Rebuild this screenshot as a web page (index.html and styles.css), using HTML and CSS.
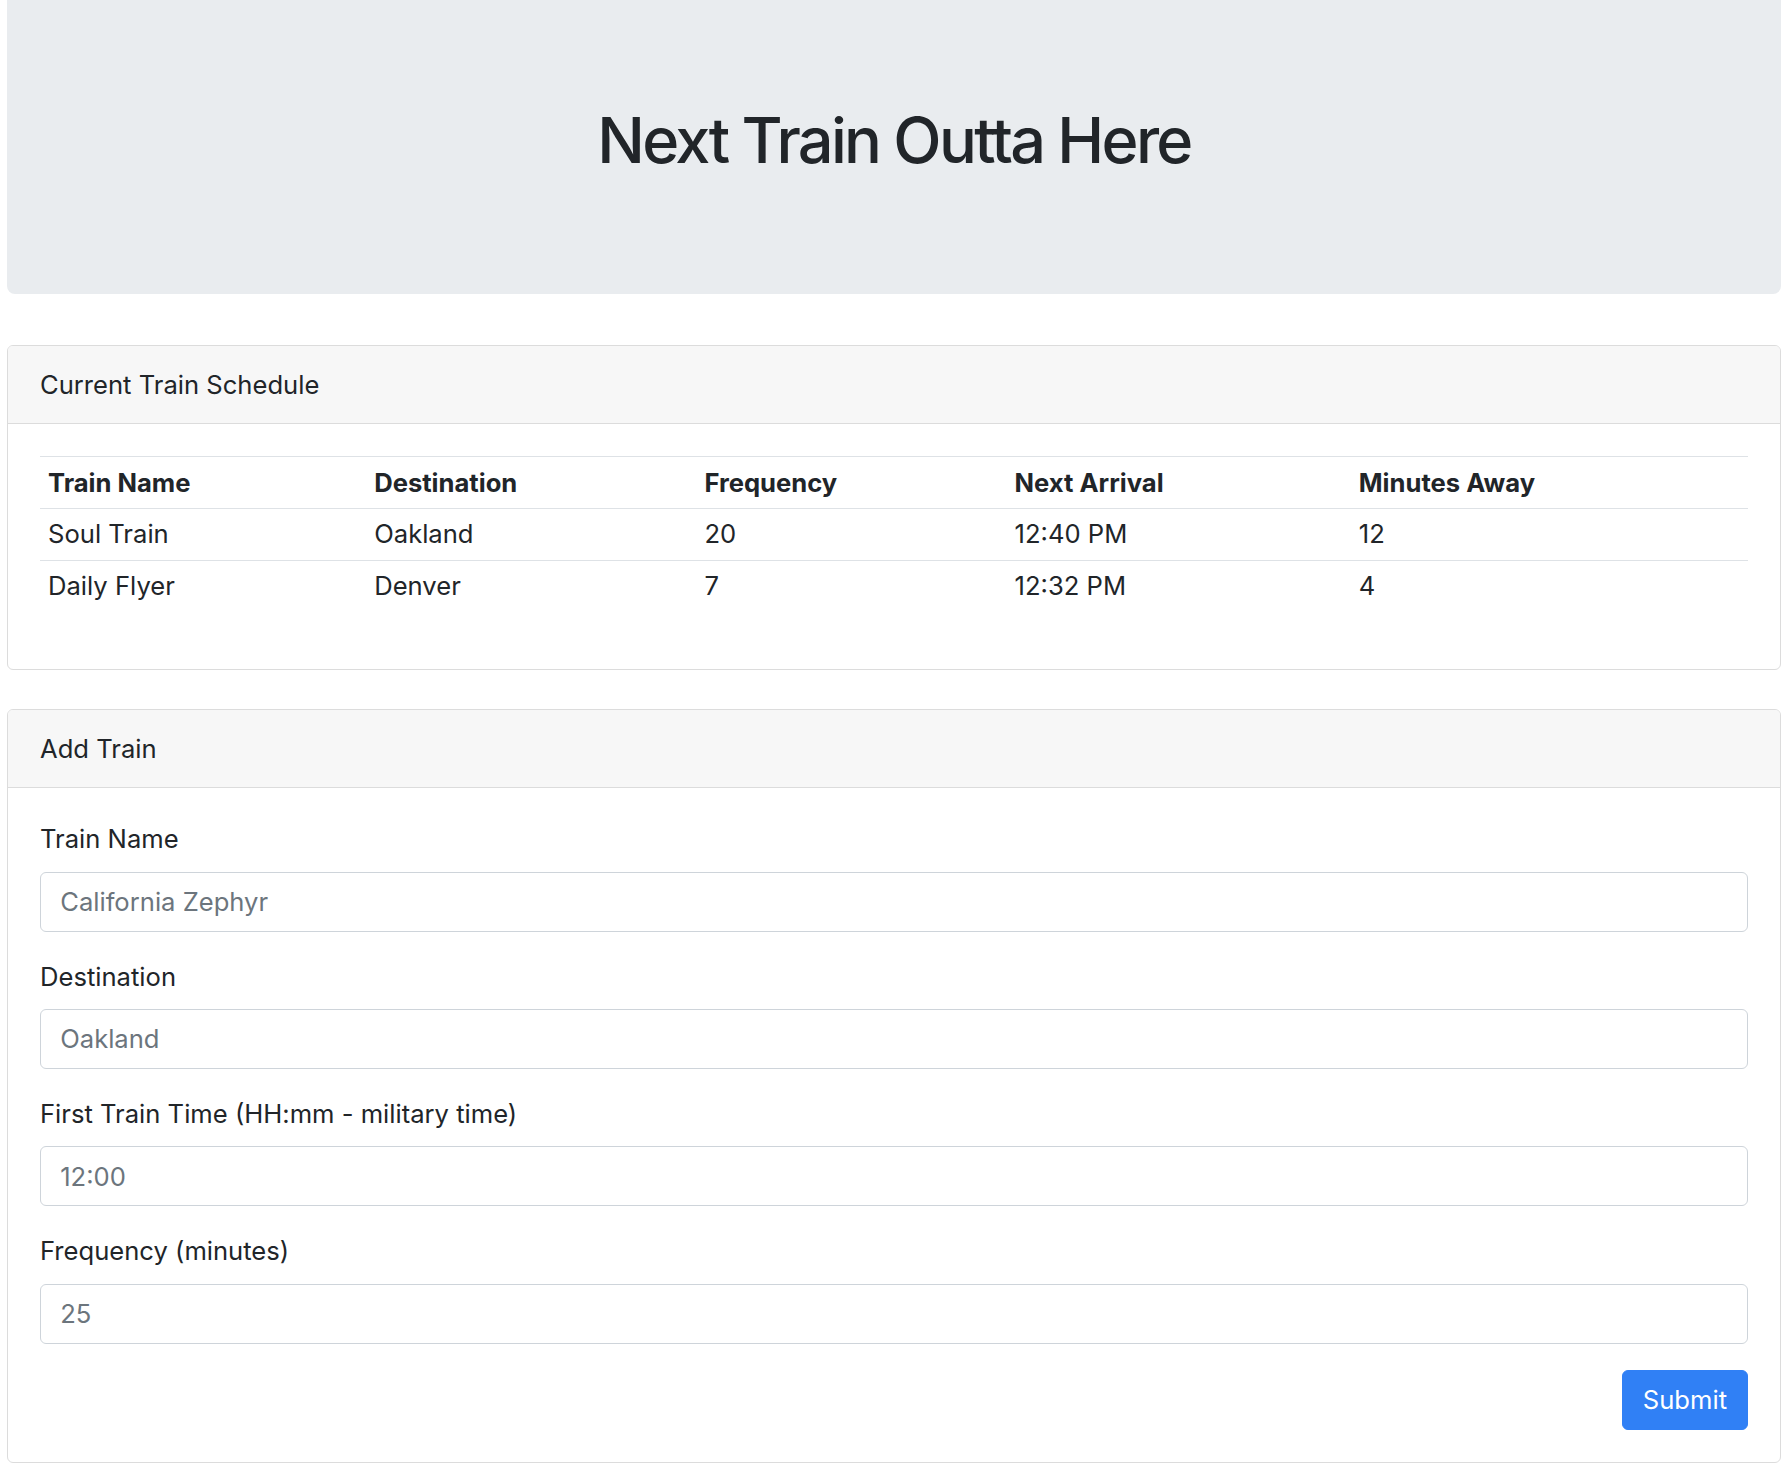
FILE: index.html
```html
<!DOCTYPE html>
<html lang="en">
<head>
<meta charset="utf-8">
<title>Train Scheduler</title>
<link rel="stylesheet" href="styles.css">
</head>
<body>
<div class="page">
  <header class="jumbotron">
    <h1 class="title">Next Train Outta Here</h1>
  </header>

  <section class="card">
    <div class="card-header">Current Train Schedule</div>
    <div class="card-body">
      <table class="table">
        <colgroup>
          <col class="c1"><col class="c2"><col class="c3"><col class="c4"><col class="c5">
        </colgroup>
        <thead>
          <tr><th>Train Name</th><th>Destination</th><th>Frequency</th><th>Next Arrival</th><th>Minutes Away</th></tr>
        </thead>
        <tbody>
          <tr><td>Soul Train</td><td>Oakland</td><td>20</td><td>12:40 PM</td><td>12</td></tr>
          <tr><td>Daily Flyer</td><td>Denver</td><td>7</td><td>12:32 PM</td><td>4</td></tr>
        </tbody>
      </table>
    </div>
  </section>

  <section class="card card-add">
    <div class="card-header">Add Train</div>
    <div class="card-body">
      <form class="form">
        <div class="form-group">
          <label for="name">Train Name</label>
          <input id="name" class="input" type="text" placeholder="California Zephyr">
        </div>
        <div class="form-group">
          <label for="dest">Destination</label>
          <input id="dest" class="input" type="text" placeholder="Oakland">
        </div>
        <div class="form-group">
          <label for="first">First Train Time (HH:mm - military time)</label>
          <input id="first" class="input" type="text" placeholder="12:00">
        </div>
        <div class="form-group">
          <label for="freq">Frequency (minutes)</label>
          <input id="freq" class="input" type="text" placeholder="25">
        </div>
        <div class="actions">
          <button type="button" class="btn">Submit</button>
        </div>
      </form>
    </div>
  </section>
</div>
</body>
</html>
```

FILE: styles.css
```css
* { box-sizing: border-box; }

html, body {
  margin: 0;
  padding: 0;
  background: #ffffff;
}

body {
  font-family: Inter, "Noto Sans", "Liberation Sans", sans-serif;
  font-size: 25.6px;
  line-height: 1.5;
  color: #212529;
}

.page {
  padding: 0 11px 0 7px;
}

.jumbotron {
  background: #e9ecef;
  border-radius: 0 0 8px 8px;
  padding: 103px 32px 115px;
  margin-bottom: 51px;
  text-align: center;
}

.title {
  margin: 0;
  font-size: 63px;
  font-weight: 500;
  line-height: 75.6px;
  letter-spacing: -2.7px;
  color: #212529;
}

.card {
  border: 1px solid #dcdcdc;
  border-radius: 6px;
  background: #fff;
  overflow: hidden;
}

.card-add {
  margin-top: 39px;
}

.card-header {
  background: #f7f7f7;
  border-bottom: 1px solid #dcdcdc;
  padding: 20px 32px 19px;
  line-height: 38.4px;
}

.card-body {
  padding: 32px 32px 32px;
}

.table {
  width: 100%;
  border-collapse: collapse;
  margin-bottom: 25px;
}

.c1 { width: 326px; }
.c2 { width: 330px; }
.c3 { width: 310px; }
.c4 { width: 344px; }
.c5 { width: 397px; }

.table th,
.table td {
  text-align: left;
  padding: 6.5px 8px 6px;
  line-height: 38.4px;
  border-top: 1px solid #dee2e6;
}

.table th {
  font-weight: 700;
}

.form-group {
  margin-bottom: 26px;
}

.form-group label {
  display: block;
  line-height: 38.4px;
  margin-bottom: 13px;
}

.input {
  display: block;
  width: 100%;
  height: 60px;
  padding: 9.6px 19.2px;
  font-family: inherit;
  font-size: 25.6px;
  line-height: 38.4px;
  color: #495057;
  background: #fff;
  border: 1px solid #ced4da;
  border-radius: 6px;
}

.input::placeholder {
  color: #6c757d;
  opacity: 1;
}

.actions {
  display: flex;
  justify-content: flex-end;
}

.btn {
  font-family: inherit;
  font-size: 25.6px;
  line-height: 38.4px;
  padding: 10px 20px;
  color: #fff;
  background: #3080f5;
  border: 1px solid #3080f5;
  border-radius: 6px;
}
```
